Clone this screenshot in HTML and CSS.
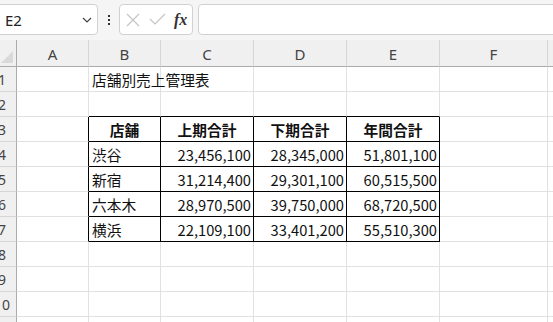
FILE: index.html
```html
<!DOCTYPE html>
<html lang="ja">

<head>
    <meta charset="utf-8">
    <meta name="viewport" content="width=device-width, initial-scale=1.0">
    <title>店舗別売上管理表</title>
    <link rel="stylesheet" href="styles.css">
</head>

<body>
    <div class="toolbar">
        <div class="namebox">
            <span>E2</span>
            <svg class="chevron" width="10" height="6" viewBox="0 0 10 6">
                <path d="M1 1 L5 5 L9 1" fill="none" stroke="#444" stroke-width="1.2" />
            </svg>
        </div>
        <div class="dots">
            <i></i><i></i><i></i>
        </div>
        <div class="fxbox">
            <svg width="14" height="14" viewBox="0 0 14 14">
                <path d="M1 1 L13 13 M13 1 L1 13" stroke="#c4c4c4" stroke-width="1.2" fill="none" />
            </svg>
            <svg width="17" height="13" viewBox="0 0 17 13">
                <path d="M1 6 L6 11 L16 1" stroke="#c4c4c4" stroke-width="1.2" fill="none" />
            </svg>
            <span class="fx">fx</span>
        </div>
        <div class="formula"></div>
    </div>

    <div id="sheet"></div>

    <script>
        let kolonner = ["A", "B", "C", "D", "E", "F", ""];
        let celler = {
            1: ["", "店舗別売上管理表"],
            3: ["", "店舗", "上期合計", "下期合計", "年間合計"],
            4: ["", "渋谷", "23,456,100", "28,345,000", "51,801,100"],
            5: ["", "新宿", "31,214,400", "29,301,100", "60,515,500"],
            6: ["", "六本木", "28,970,500", "39,750,000", "68,720,500"],
            7: ["", "横浜", "22,109,100", "33,401,200", "55,510,300"]
        };

        let dest = document.querySelector("#sheet");

        // kolonne overskrifter
        dest.insertAdjacentHTML("beforeend", `<div class="hd corner"><b></b></div>`);
        kolonner.forEach(k => {
            dest.insertAdjacentHTML("beforeend", `<div class="hd col">${k}</div>`);
        });

        for (let r = 1; r <= 11; r++) {
            let data = celler[r] || [];
            dest.insertAdjacentHTML("beforeend", `<div class="hd row">${r}</div>`);
            for (let c = 0; c < 7; c++) {
                let tekst = data[c] || "";
                let klasse = "cell";
                let iTabel = r >= 3 && r <= 7 && c >= 1 && c <= 4;
                if (iTabel) klasse += " tbl";
                if (r >= 3 && r <= 7 && c == 0) klasse += " venstre";
                if (r == 2 && c >= 1 && c <= 4) klasse += " top";
                if (r == 3 && iTabel) klasse += " head";
                else if (iTabel && c >= 2) klasse += " num";
                if (r == 1 && c == 1) klasse += " titel";
                dest.insertAdjacentHTML("beforeend", `<div class="${klasse}">${tekst}</div>`);
            }
        }
    </script>
</body>

</html>
```

FILE: styles.css
```css
body {
    margin: 0;
    background-color: #f5f5f5;
    overflow: hidden;
    font-family: "Noto Sans CJK JP", sans-serif;
}

/* TOOLBAR */

.toolbar {
    display: flex;
    align-items: flex-start;
    height: 40px;
    padding-top: 4px;
    box-sizing: border-box;
}

.namebox {
    display: flex;
    align-items: center;
    justify-content: space-between;
    margin-left: -6px;
    width: 104px;
    height: 31px;
    box-sizing: border-box;
    padding: 0 5px 0 10px;
    background-color: white;
    border: 1px solid #d1d1d1;
    border-radius: 4px;
    font-family: "Noto Sans", sans-serif;
    font-size: 15px;
    color: #222;
}

.dots {
    display: flex;
    flex-direction: column;
    gap: 2px;
    width: 21px;
    align-items: center;
    padding-top: 11px;
}

.dots i {
    width: 2px;
    height: 2px;
    background-color: #333;
}

.fxbox {
    display: flex;
    align-items: center;
    width: 74px;
    height: 31px;
    box-sizing: border-box;
    padding-left: 6px;
    gap: 9px;
    background-color: white;
    border: 1px solid #d1d1d1;
    border-radius: 4px;
}

.fx {
    font-family: "Liberation Serif", serif;
    font-style: italic;
    font-weight: bold;
    font-size: 16px;
    color: #333;
    margin-left: -1px;
}

.formula {
    flex: 1;
    margin-left: 5px;
    margin-right: -10px;
    height: 31px;
    box-sizing: border-box;
    background-color: white;
    border: 1px solid #d1d1d1;
    border-radius: 4px;
}

/* ARK */

#sheet {
    display: grid;
    grid-template-columns: 29px 72px 72px 93px 93px 93px 108px 60px;
    grid-template-rows: 27px repeat(11, 25px);
    margin-left: -12px;
    background-color: white;
}

#sheet div {
    box-sizing: border-box;
}

.hd {
    background-color: #f0f0f0;
    color: #444;
    font-family: "Noto Sans", sans-serif;
    display: flex;
    align-items: center;
    justify-content: center;
}

.col {
    font-size: 15px;
    border-right: 1px solid #d6d6d6;
    border-bottom: 1px solid #ababab;
    padding-top: 2px;
}

.corner {
    border-right: 1px solid #ababab;
    border-bottom: 1px solid #ababab;
    position: relative;
}

.corner b {
    position: absolute;
    right: 3px;
    bottom: 3px;
    width: 0;
    height: 0;
    border-left: 12px solid transparent;
    border-bottom: 12px solid #d9d9d9;
}

.row {
    font-size: 14px;
    border-right: 1px solid #ababab;
    border-bottom: 1px solid #d6d6d6;
}

.cell {
    border-right: 1px solid #e1e1e1;
    border-bottom: 1px solid #e1e1e1;
    font-size: 14.7px;
    color: #111;
    white-space: nowrap;
    display: flex;
    align-items: center;
    padding: 1px 3px 0 3px;
}

.titel {
    overflow: visible;
}

.tbl {
    border-right: 1px solid black;
    border-bottom: 1px solid black;
}

.venstre {
    border-right: 1px solid black;
}

.top {
    border-bottom: 1px solid black;
}

.head {
    font-weight: bold;
    justify-content: center;
}

.num {
    justify-content: flex-end;
    padding-right: 2px;
}
```
